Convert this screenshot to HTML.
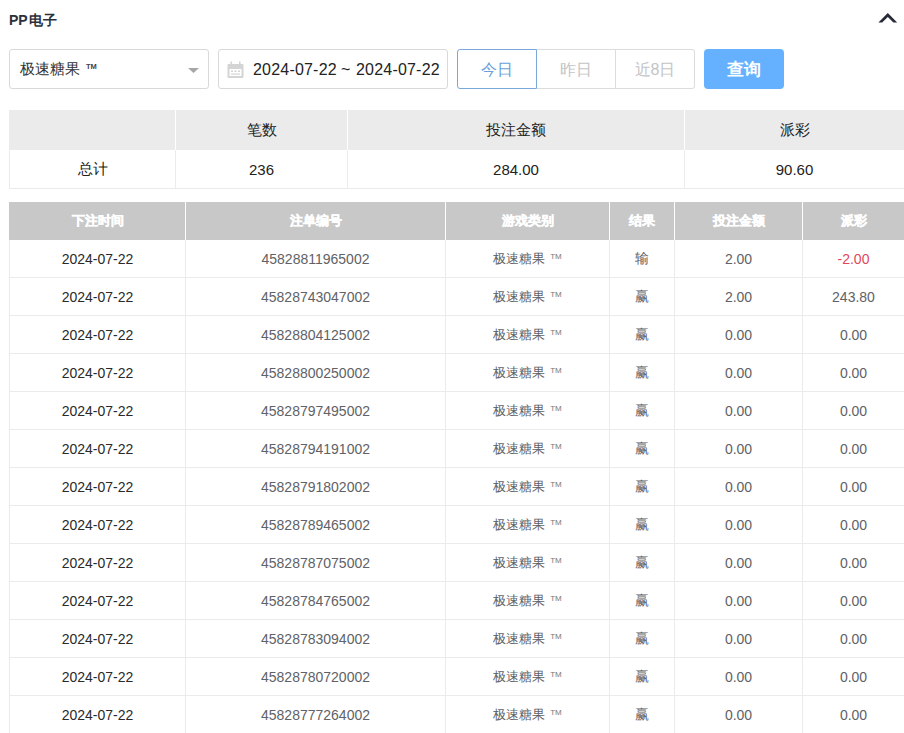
<!DOCTYPE html>
<html><head><meta charset="utf-8">
<style>
*{box-sizing:border-box;margin:0;padding:0}
html,body{width:904px;height:733px;overflow:hidden;background:#fff;font-family:"Liberation Sans",sans-serif;color:#333}
.abs{position:absolute}
#title{left:9px;top:10px;font-size:14px;font-weight:bold;color:#2b303b;line-height:20px}
#chev{left:876px;top:10px}
.box{position:absolute;top:49px;height:40px;border:1px solid #d9d9d9;border-radius:3px;background:#fff}
#sel{left:9px;width:200px}
#sel .t{position:absolute;left:10px;top:0px;line-height:38px;font-size:15px;color:#333}
#date{left:218px;width:230px}
#date .t{position:absolute;top:1px;line-height:38px;font-size:16px;color:#222;letter-spacing:0.2px}
.gbtn{position:absolute;top:49px;height:40px;line-height:40px;text-align:center;font-size:16px;color:#c4c4c4;border-top:1px solid #dcdcdc;border-bottom:1px solid #dcdcdc;background:#fff}
.tm2{font-size:7.5px;font-weight:bold;position:relative;top:-5px;margin-left:6px;color:#444}
#q{position:absolute;left:704px;top:49px;width:80px;height:40px;border-radius:4px;background:#66b1ff;color:#fff;font-weight:bold;font-size:17px;text-align:center;line-height:42px}
table{border-collapse:separate;border-spacing:0;position:absolute;table-layout:fixed}
td,th{height:auto}
td,th{text-align:center;padding:0;font-weight:normal}
#sum{left:9px;top:110px;width:895px}
#sum th{background:#ebebeb;height:40px;font-size:15px;color:#222;border-left:1px solid #fff}
#sum td{height:39px;font-size:15px;color:#222;border-left:1px solid #ebebeb;border-bottom:1px solid #ebebeb}
#main{left:9px;top:202px;width:895px}
#main th{background:#c8c8c8;height:38px;font-size:13px;color:#fff;font-weight:bold;border-left:1px solid #fff}
#main th:first-child,#sum th:first-child{border-left-color:#c8c8c8}
#sum th:first-child{border-left-color:#ebebeb}
#main td{height:38px;font-size:14px;color:#333;border-left:1px solid #ebebeb;border-bottom:1px solid #ebebeb}
#main td{color:#606266}
#main td:nth-child(1){color:#2a2a2a}
#main td:nth-child(3){font-size:13px}
#main td.red{color:#e0485a}
.tm{font-size:8px;position:relative;top:-4px;margin-left:5px;color:#777}
#main th{-webkit-text-stroke:0.4px #fff}
</style></head><body>
<div id="title" class="abs">PP<span style="font-size:14px;margin-left:1px;letter-spacing:0.5px;position:relative;top:0px">电子</span></div>
<svg id="chev" class="abs" width="24" height="16" viewBox="0 0 24 16"><path d="M2.4 12.6 L11.8 2.9 L21.2 12.6 L17.4 12.6 L11.8 6.9 L6.2 12.6 Z" fill="#262b36"/></svg>
<div id="sel" class="box"><span class="t">极速糖果<span class="tm2">TM</span></span>
<svg class="abs" style="left:178px;top:18px" width="11" height="6" viewBox="0 0 11 6"><path d="M0 0 L11 0 L5.5 5 Z" fill="#a6a6a6"/></svg>
</div>
<div id="date" class="box">
<svg class="abs" style="left:8px;top:11px" width="17" height="17" viewBox="0 0 17 17">
<rect x="0.5" y="3" width="16" height="14" rx="1" fill="#d4d4d4"/>
<rect x="2.5" y="8" width="12" height="7" fill="#fff"/>
<rect x="4" y="9.5" width="2" height="1.5" fill="#d4d4d4"/><rect x="7.5" y="9.5" width="2" height="1.5" fill="#d4d4d4"/><rect x="11" y="9.5" width="2" height="1.5" fill="#d4d4d4"/>
<rect x="4" y="12.5" width="9" height="1.2" fill="#d4d4d4"/>
<rect x="3.5" y="0.5" width="1.6" height="4" fill="#d4d4d4"/><rect x="12" y="0.5" width="1.6" height="4" fill="#d4d4d4"/>
</svg>
<span class="t" style="left:34px">2024-07-22</span><span class="t" style="left:122px">~</span><span class="t" style="left:137px">2024-07-22</span></div>
<div class="gbtn" style="left:457px;width:80px;border:1px solid #7aa8da;border-radius:3px 0 0 3px;color:#6a9fdc">今日</div>
<div class="gbtn" style="left:537px;width:79px;border-right:1px solid #dcdcdc">昨日</div>
<div class="gbtn" style="left:616px;width:79px;border-right:1px solid #dcdcdc;border-radius:0 3px 3px 0">近8日</div>
<div id="q">查询</div>
<table id="sum">
<colgroup><col style="width:166px"><col style="width:172px"><col style="width:337px"><col style="width:220px"></colgroup>
<tr><th></th><th>笔数</th><th>投注金额</th><th>派彩</th></tr>
<tr><td>总计</td><td>236</td><td>284.00</td><td>90.60</td></tr>
</table>
<table id="main">
<colgroup><col style="width:176px"><col style="width:260px"><col style="width:164px"><col style="width:65px"><col style="width:128px"><col style="width:102px"></colgroup>
<tr><th>下注时间</th><th>注单编号</th><th>游戏类别</th><th>结果</th><th>投注金额</th><th>派彩</th></tr>
<tr><td>2024-07-22</td><td>45828811965002</td><td>极速糖果<span class="tm">TM</span></td><td>输</td><td>2.00</td><td class="red">-2.00</td></tr>
<tr><td>2024-07-22</td><td>45828743047002</td><td>极速糖果<span class="tm">TM</span></td><td>赢</td><td>2.00</td><td>243.80</td></tr>
<tr><td>2024-07-22</td><td>45828804125002</td><td>极速糖果<span class="tm">TM</span></td><td>赢</td><td>0.00</td><td>0.00</td></tr>
<tr><td>2024-07-22</td><td>45828800250002</td><td>极速糖果<span class="tm">TM</span></td><td>赢</td><td>0.00</td><td>0.00</td></tr>
<tr><td>2024-07-22</td><td>45828797495002</td><td>极速糖果<span class="tm">TM</span></td><td>赢</td><td>0.00</td><td>0.00</td></tr>
<tr><td>2024-07-22</td><td>45828794191002</td><td>极速糖果<span class="tm">TM</span></td><td>赢</td><td>0.00</td><td>0.00</td></tr>
<tr><td>2024-07-22</td><td>45828791802002</td><td>极速糖果<span class="tm">TM</span></td><td>赢</td><td>0.00</td><td>0.00</td></tr>
<tr><td>2024-07-22</td><td>45828789465002</td><td>极速糖果<span class="tm">TM</span></td><td>赢</td><td>0.00</td><td>0.00</td></tr>
<tr><td>2024-07-22</td><td>45828787075002</td><td>极速糖果<span class="tm">TM</span></td><td>赢</td><td>0.00</td><td>0.00</td></tr>
<tr><td>2024-07-22</td><td>45828784765002</td><td>极速糖果<span class="tm">TM</span></td><td>赢</td><td>0.00</td><td>0.00</td></tr>
<tr><td>2024-07-22</td><td>45828783094002</td><td>极速糖果<span class="tm">TM</span></td><td>赢</td><td>0.00</td><td>0.00</td></tr>
<tr><td>2024-07-22</td><td>45828780720002</td><td>极速糖果<span class="tm">TM</span></td><td>赢</td><td>0.00</td><td>0.00</td></tr>
<tr><td>2024-07-22</td><td>45828777264002</td><td>极速糖果<span class="tm">TM</span></td><td>赢</td><td>0.00</td><td>0.00</td></tr>
</table>
</body></html>
